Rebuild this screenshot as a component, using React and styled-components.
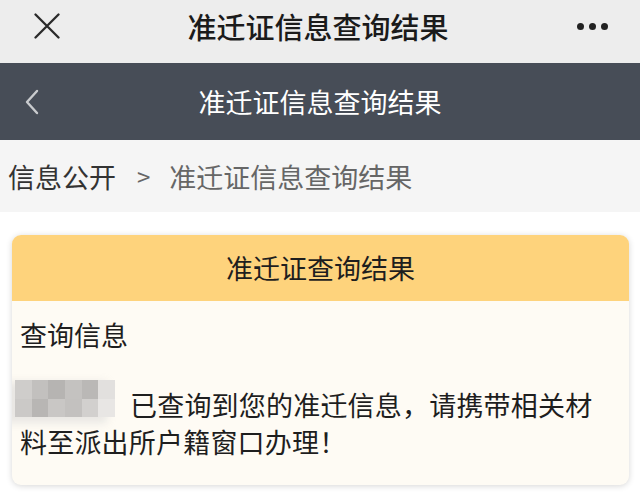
import React from 'react'
import styled, { createGlobalStyle } from 'styled-components'

const GlobalStyle = createGlobalStyle`
    html, body {
        margin: 0;
        padding: 0;
        background: #fff;
    }
    body {
        font-family: 'Noto Sans CJK SC', 'Noto Sans', sans-serif;
        -webkit-font-smoothing: antialiased;
    }
`

const Page = styled.div`
    width: 640px;
    min-height: 501px;
    background: #fff;
    overflow: hidden;
`

const TopBar = styled.div`
    height: 63px;
    background: #ededed;
    display: grid;
    grid-template-columns: 1fr auto 1fr;
    align-items: center;
`

const TopTitle = styled.div`
    font-size: 29px;
    font-weight: 500;
    color: #1b1b1b;
    line-height: 1;
    margin-top: -10px;
    padding-right: 4px;
`

const CloseBtn = styled.div`
    justify-self: start;
    padding-left: 34px;
    margin-top: -11px;
    display: flex;
`

const MoreBtn = styled.div`
    justify-self: end;
    padding-right: 32px;
    margin-top: -11px;
    display: flex;
    gap: 5px;
`

const Dot = styled.span`
    width: 7px;
    height: 7px;
    border-radius: 50%;
    background: #222;
`

const NavBar = styled.div`
    height: 77px;
    background: #474d57;
    display: grid;
    grid-template-columns: 1fr auto 1fr;
    align-items: center;
`

const NavTitle = styled.div`
    font-size: 27px;
    color: #fff;
    line-height: 1;
`

const BackBtn = styled.div`
    padding-left: 24px;
    display: flex;
`

const Crumbs = styled.div`
    height: 72px;
    background: #f5f5f5;
    display: flex;
    align-items: center;
    padding-left: 8px;
    font-size: 27px;
    line-height: 1;
`

const CrumbLink = styled.span`
    color: #333;
`

const CrumbSep = styled.span`
    color: #666;
    font-size: 24px;
    margin: 0 19px 0 21px;
`

const CrumbCurrent = styled.span`
    color: #666;
`

const Card = styled.div`
    margin: 23px 11px 0 12px;
    border-radius: 9px;
    overflow: hidden;
    background: #fefbf4;
    box-shadow: 0 1px 6px rgba(0, 0, 0, 0.16);
`

const CardHeader = styled.div`
    height: 66px;
    background: #fed37c;
    display: flex;
    align-items: center;
    justify-content: center;
    font-size: 27px;
    color: #1e1e1e;
    padding-bottom: 2px;
    box-sizing: border-box;
`

const CardBody = styled.div`
    padding: 16px 20px 25px 8px;
    color: #1e1e1e;
    font-size: 27px;
`

const SectionTitle = styled.div`
    line-height: 36px;
`

const Message = styled.p`
    margin: 33px 0 0 0;
    line-height: 37px;
    letter-spacing: 0.2px;
`

const Name = styled.span`
    position: relative;
    display: inline-block;
    width: 110px;
    height: 1em;
    vertical-align: -3px;
`

const Mosaic = styled.span`
    position: absolute;
    left: -5px;
    top: -12px;
    width: 100px;
    height: 37px;
    display: grid;
    grid-template-columns: repeat(6, 1fr);
    grid-template-rows: repeat(2, 1fr);
    box-shadow: -10px 4px 8px 2px rgba(228, 226, 224, 0.8);
`

const Cell = styled.span`
    background: ${p => p.$c};
`

const mosaic = [
    '#cfcdcb', '#c2c0be', '#b6b4b2', '#c4c2c0', '#bab8b6', '#e2e0de',
    '#cbc9c7', '#b8b6b4', '#c9c7c5', '#c3c1bf', '#d2d0ce', '#e8e6e4',
]

const CloseIcon = () => (
    <svg width="26" height="26" viewBox="0 0 26 26">
        <path d="M1.5 1.5 L24.5 24.5 M24.5 1.5 L1.5 24.5" stroke="#2a2a2a" strokeWidth="2.3" strokeLinecap="round" />
    </svg>
)

const BackIcon = () => (
    <svg width="16" height="26" viewBox="0 0 16 26">
        <path d="M13 2 L3 13 L13 24" stroke="#c9cbce" strokeWidth="2.4" fill="none" strokeLinecap="round" strokeLinejoin="round" />
    </svg>
)

const App = () => {
    return (
        <Page>
            <GlobalStyle />
            <TopBar>
                <CloseBtn><CloseIcon /></CloseBtn>
                <TopTitle>准迁证信息查询结果</TopTitle>
                <MoreBtn><Dot /><Dot /><Dot /></MoreBtn>
            </TopBar>
            <NavBar>
                <BackBtn><BackIcon /></BackBtn>
                <NavTitle>准迁证信息查询结果</NavTitle>
                <div />
            </NavBar>
            <Crumbs>
                <CrumbLink>信息公开</CrumbLink>
                <CrumbSep>&gt;</CrumbSep>
                <CrumbCurrent>准迁证信息查询结果</CrumbCurrent>
            </Crumbs>
            <Card>
                <CardHeader>准迁证查询结果</CardHeader>
                <CardBody>
                    <SectionTitle>查询信息</SectionTitle>
                    <Message>
                        <Name>
                            <Mosaic>
                                {mosaic.map((c, i) => <Cell key={i} $c={c} />)}
                            </Mosaic>
                        </Name>
                        已查询到您的准迁信息，请携带相关材料至派出所户籍窗口办理！
                    </Message>
                </CardBody>
            </Card>
        </Page>
    )
}

export default App
